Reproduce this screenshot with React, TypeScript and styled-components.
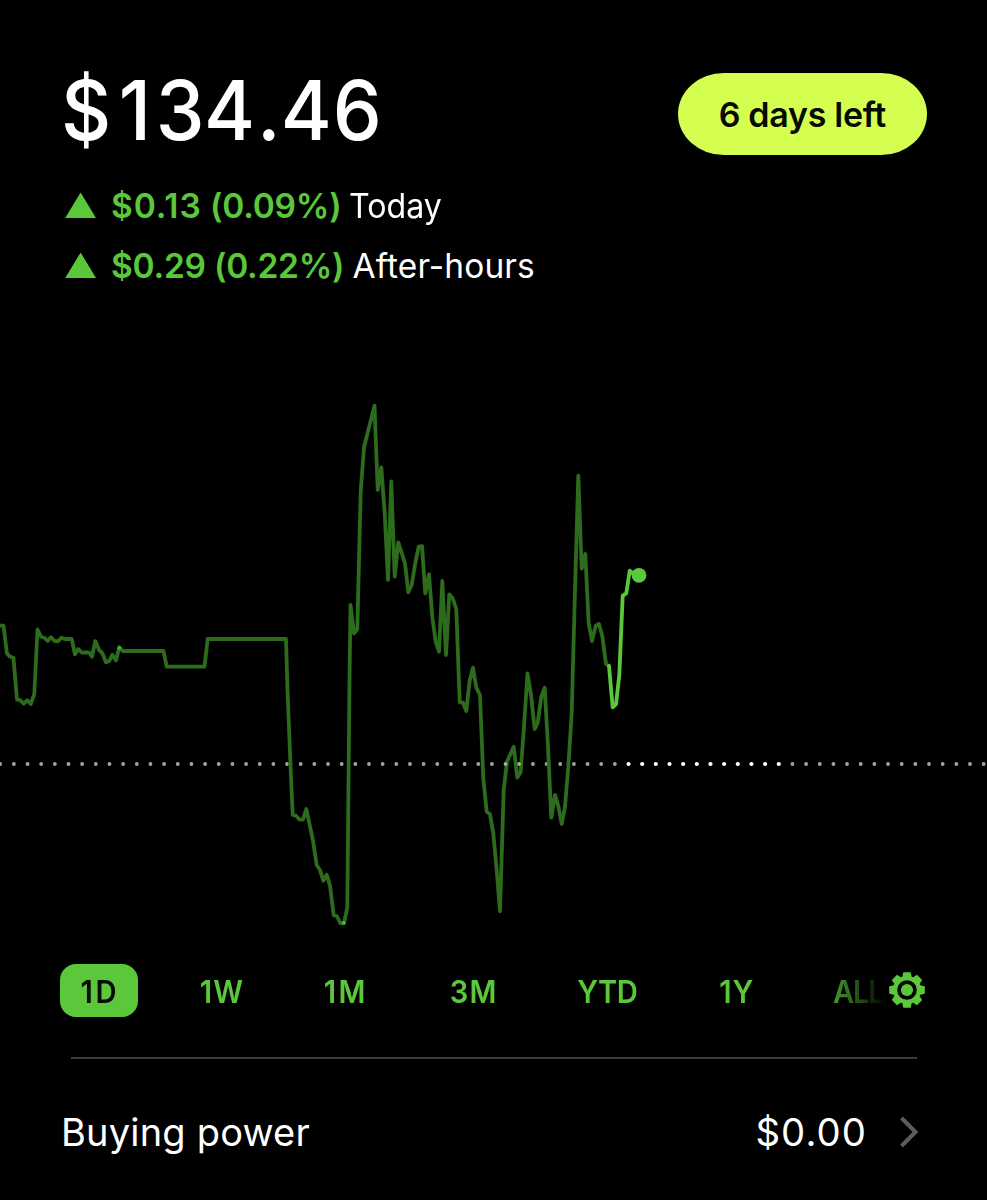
import React from "react";
import styled, { createGlobalStyle } from "styled-components";

const GREEN = "#5ac83a";
const DIM_GREEN = "#2d6b1d";

const GlobalStyle = createGlobalStyle`
  *, *::before, *::after { box-sizing: border-box; }
  html, body { margin: 0; padding: 0; background: #000; }
`;

const Screen = styled.main`
  display: flex;
  flex-direction: column;
  width: 987px;
  height: 1200px;
  overflow: hidden;
  background: #000;
  color: #fff;
  font-family: Inter, "Liberation Sans", sans-serif;
`;

const Header = styled.header`
  display: flex;
  justify-content: space-between;
  align-items: flex-start;
  height: 380px;
  padding: 68px 60px 0 61px;
`;

const Summary = styled.div`
  display: flex;
  flex-direction: column;
`;

/* Text with tunable tracking and horizontal condensing. */
const Type = styled.span<{
  $size: number;
  $weight: number;
  $track?: number;
  $stretch?: number;
  $origin?: string;
}>`
  display: inline-block;
  white-space: pre;
  font-size: ${(p) => p.$size}px;
  font-weight: ${(p) => p.$weight};
  letter-spacing: ${(p) => p.$track ?? 0}px;
  margin-right: ${(p) => -(p.$track ?? 0)}px;
  transform: scaleX(${(p) => p.$stretch ?? 1});
  transform-origin: ${(p) => p.$origin ?? "left"} center;
`;

const Balance = styled.h1`
  display: flex;
  margin: 0 0 24px;
  height: 84px;
  line-height: 84px;
  font-weight: inherit;
`;

const Digit = styled.span<{ $after: number }>`
  letter-spacing: ${(p) => p.$after}px;
`;

const ChangeRow = styled.div`
  display: flex;
  align-items: center;
  height: 60px;
  padding-left: 4px;
  line-height: 40px;
`;

const UpArrow = styled.svg`
  flex: none;
  width: 32px;
  height: 26px;
  margin: 0 14px 3px 0;
`;

const Amount = styled.span<{ $width: number }>`
  display: flex;
  flex: none;
  width: ${(p) => p.$width}px;
  color: ${GREEN};
`;

const TrialButton = styled.button`
  display: flex;
  align-items: center;
  justify-content: center;
  width: 249px;
  height: 82px;
  margin-top: 5px;
  padding: 1px 0 0;
  border: 0;
  border-radius: 46px / 41px;
  background: #d5ff50;
  color: #060a00;
  font-family: inherit;
  line-height: 82px;
`;

const Chart = styled.svg`
  display: block;
  flex: none;
  width: 987px;
  height: 560px;
`;

const RangeBar = styled.nav`
  display: flex;
  align-items: center;
  height: 53px;
  margin: 24px 0 0 60px;
`;

const RangeList = styled.div`
  display: flex;
  flex: none;
  gap: 42.5px;
  width: 829px;
  overflow: hidden;
  mask-image: linear-gradient(to right, #000 757px, transparent 826px);
`;

const RangeTab = styled.button<{ $width: number; $active?: boolean }>`
  display: flex;
  flex: none;
  align-items: center;
  justify-content: center;
  width: ${(p) => p.$width}px;
  height: 53px;
  padding: ${(p) => (p.$active ? "2px 1px 0 0" : "2px 0 0 1px")};
  border: 0;
  border-radius: 16px;
  background: ${(p) => (p.$active ? GREEN : "transparent")};
  color: ${(p) => (p.$active ? "#040a02" : GREEN)};
  font-family: inherit;
  line-height: 52px;
`;

const Gear = styled.svg`
  flex: none;
  width: 36px;
  height: 36px;
  margin-bottom: 1px;
`;

const Divider = styled.hr`
  flex: none;
  width: 846px;
  height: 2px;
  margin: 40px 0 0 70.5px;
  border: 0;
  background: #3b3b3d;
`;

const PowerRow = styled.section`
  display: flex;
  align-items: center;
  height: 60px;
  margin-top: 43px;
  padding: 0 68px 0 61px;
  line-height: 60px;
`;

const Spacer = styled.div`
  flex: 1;
`;

const Chevron = styled.svg`
  flex: none;
  width: 20px;
  height: 32px;
  margin: 0 0 1px 33px;
`;

const history =
  "-2,625.7 3.5,625.7 7,653.7 10,656.5 13.5,658 17,699.7 20,700 23.7,703.7 27.3,700.3 30.7,704 34.3,694 37.5,629.5 41,636.7 44.3,637.7 47.7,641 51,637.3 54.7,641 58,641.3 61.3,637.7 64.7,639 71.7,639 75,654.3 78.3,649 81.7,652.5 89,652.5 92,656.7 95.3,641 99,650 102.3,653 106,662.3 109.3,661 112.3,654.7 116,660.3 119.3,647.3 122.7,651 163.5,651 166.7,666.7 204.5,666.7 207.7,639 286,639 287.5,690 290.7,770 292.7,815 296,815.7 299.7,819.7 303,819.5 306.3,809 310,826.5 313,840.7 316.7,865 320,870 323.3,880.7 326.7,874.7 330,885.7 333.7,915.3 337,916.3 340.3,923.3 344,923 347.3,907.3 349.5,680 350.5,605 354,633.3 357.3,629.3 360.7,491.7 364,447.3 374.5,405.7 377.7,490 381.3,467.3 384.7,513 388,580 391.3,481.3 394.7,576.7 398.3,542.3 401.7,553 405,563.3 408.3,592.3 411.7,585 415.3,563 418.7,546.7 422,546 425.3,593.3 429,574.3 432.3,616.7 435.7,641.7 439,651.7 442.3,581 446,655 449.3,594.3 452.7,598.3 456.3,609 459.7,702.3 463,702.7 466.3,711 469.7,680.7 473,667.7 476.3,687.7 480,695 483.3,778.3 486.7,811.7 490,814.3 493.3,833.3 496.7,870 500,911.3 503.7,790 507,761.7 513.7,746.7 517.3,777.5 520.7,771.7 524,726.7 527.5,673.3 531,695 534.7,729 537.7,722.7 541.3,696.7 544.7,687.7 548,746.7 551.3,817.7 555,795 558.3,806 561.7,824 565,806.7 568.3,766.7 571.7,713.3 575,590 578.3,475.7 581.7,568.7 585.3,554 588.7,623.3 592,641 595.7,625.7 599,624 602.3,636 606,664 609,666";
const live =
  "609,666 612.7,707.3 616,704.3 619.3,675 622.7,595.7 626.3,593.3 629.7,570.7 633,573.5 639,575.3";

const dots = Array.from({ length: 73 }, (_, i) => ({
  index: i,
  x: 0.2 + i * 13.659,
  bright: i >= 46 && i <= 57,
}));

const balance: [string, number][] = [
  ["$", 8],
  ["1", 4.8],
  ["3", -0.4],
  ["4", 2],
  [".", 0.2],
  ["4", 0.9],
  ["6", 0],
];

const ranges = [
  { label: "1D", width: 78, track: 2.8 },
  { label: "1W", width: 80.4, track: 1.4 },
  { label: "1M", width: 82.2, track: 2.8 },
  { label: "3M", width: 88.2, track: 1.2 },
  { label: "YTD", width: 96.8, track: -0.5 },
  { label: "1Y", width: 75.2, track: 1 },
  { label: "ALL", width: 85.2, track: -1.3 },
];

const changes = [
  { value: "$0.13", percent: " (0.09%)", valueTrack: 0.9, percentTrack: -0.2, width: 237.5, when: "Today", whenTrack: 0, stretch: 0.96 },
  { value: "$0.29", percent: " (0.22%)", valueTrack: -0.25, percentTrack: -0.25, width: 241.5, when: "After-hours", whenTrack: 0.1, stretch: 1 },
];

export default function App() {
  return (
    <>
      <GlobalStyle />
      <Screen>
        <Header>
          <Summary>
            <Balance>
              <Type $size={82.3} $weight={500} $stretch={0.945}>
                {balance.map(([char, after], i) => (
                  <Digit key={i} $after={after}>
                    {char}
                  </Digit>
                ))}
              </Type>
            </Balance>
            {changes.map((c) => (
              <ChangeRow key={c.when}>
                <UpArrow viewBox="0 0 32 26">
                  <path d="M15.6 0.5 31 26H0.2Z" fill={GREEN} />
                </UpArrow>
                <Amount $width={c.width}>
                  <Type $size={33.5} $weight={600}>
                    <Digit $after={c.valueTrack}>{c.value}</Digit>
                    <Digit $after={c.percentTrack}>{c.percent}</Digit>
                  </Type>
                </Amount>
                <Type $size={33.5} $weight={400} $track={c.whenTrack} $stretch={c.stretch}>
                  {c.when}
                </Type>
              </ChangeRow>
            ))}
          </Summary>
          <TrialButton>
            <Type $size={34} $weight={600} $track={-0.3}>
              6 days left
            </Type>
          </TrialButton>
        </Header>

        <Chart viewBox="0 380 987 560" fill="none">
          {dots.map((d) => (
            <circle
              key={d.index}
              cx={d.x}
              cy={764}
              r={d.bright ? 2.1 : 1.9}
              fill={d.bright ? "#fff" : "#a3a3a5"}
            />
          ))}
          <polyline
            points={history}
            stroke={DIM_GREEN}
            strokeWidth={3.8}
            strokeLinejoin="round"
            strokeLinecap="round"
          />
          {dots
            .filter((d) => d.index === 37 || d.index === 38)
            .map((d) => (
              <circle key={d.index} cx={d.x} cy={764} r={1.8} fill="#a3b79c" />
            ))}
          <circle cx={119.3} cy={648} r={1.9} fill="#4aa634" />
          <circle cx={343.8} cy={922.8} r={1.9} fill="#4fb437" />
          <polyline
            points={live}
            stroke={GREEN}
            strokeWidth={3.8}
            strokeLinejoin="round"
            strokeLinecap="round"
          />
          <circle cx={639} cy={575.3} r={7.4} fill={GREEN} />
        </Chart>

        <RangeBar>
          <RangeList>
            {ranges.map((r, i) => (
              <RangeTab key={r.label} $width={r.width} $active={i === 0}>
                <Type $size={31.4} $weight={600} $track={r.track} $stretch={0.93} $origin="center">
                  {r.label}
                </Type>
              </RangeTab>
            ))}
          </RangeList>
          <Gear viewBox="-18 -18 36 36">
            {[0, 45, 90, 135, 180, 225, 270, 315].map((a) => (
              <path
                key={a}
                d="M-4.9-12 -3.7-17.8H3.7L4.9-12Z"
                transform={`rotate(${a})`}
                fill={GREEN}
              />
            ))}
            <circle r={11.9} fill="none" stroke={GREEN} strokeWidth={4.2} />
            <circle r={6.1} fill={GREEN} />
          </Gear>
        </RangeBar>

        <Divider />

        <PowerRow>
          <Type $size={38} $weight={400} $track={0.2}>
            Buying power
          </Type>
          <Spacer />
          <Type $size={38.3} $weight={400} $track={1.1}>
            $0.00
          </Type>
          <Chevron viewBox="0 0 20 32" fill="none">
            <path d="M2.5 2 16.5 16 2.5 30" stroke="#595e60" strokeWidth={4} />
          </Chevron>
        </PowerRow>
      </Screen>
    </>
  );
}
